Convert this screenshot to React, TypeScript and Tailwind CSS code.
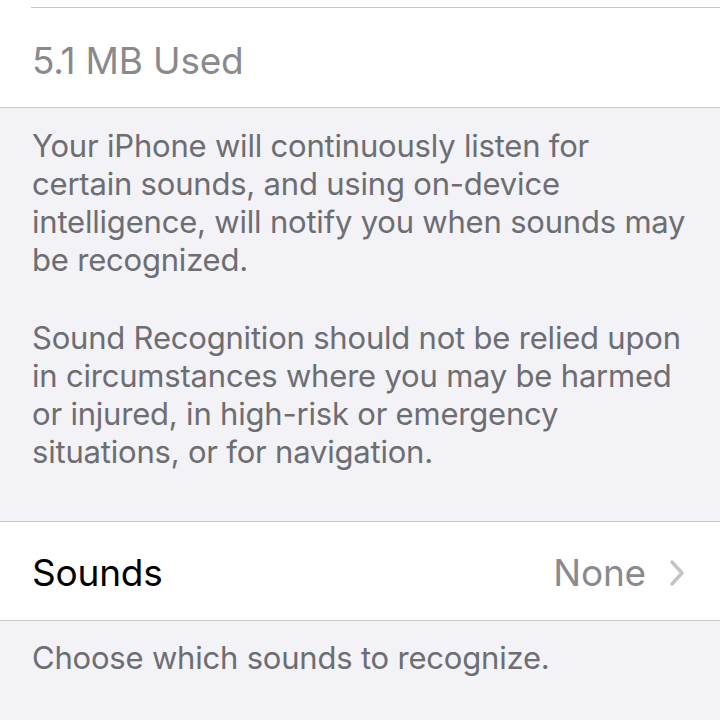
import React from 'react';

const App: React.FC = () => {
  return (
    <div className="w-[720px] h-[720px] overflow-hidden bg-[#f2f2f7] font-['Inter','Noto_Sans',sans-serif]">
      {/* Storage cell */}
      <div className="bg-white border-b border-[#c8c7cc]">
        <div className="h-[8px] ml-[31px] border-b border-[#c8c7cc]" />
        <div className="h-[99px] flex items-center pl-[32px] pt-[6px]">
          <span className="text-[37px] tracking-[-0.2px] text-[#8a8a8e]">5.1 MB Used</span>
        </div>
      </div>

      {/* Footer */}
      <div className="px-[32px] pt-[19px] pb-[50px] text-[31px] leading-[38px] text-[#6d6d72] tracking-[-0.2px]">
        <p>
          Your iPhone will continuously listen for certain sounds, and using on-device
          intelligence, will notify you when sounds may be recognized.
        </p>
        <p className="mt-[40px]">
          Sound Recognition should not be relied upon in circumstances where you may be harmed
          or injured, in high-risk or emergency situations, or for navigation.
        </p>
      </div>

      {/* Sounds cell */}
      <div className="bg-white border-y border-[#c8c7cc] h-[100px] flex items-center pl-[32px] pr-[34px] pt-[4px]">
        <span className="flex-1 text-[37px] tracking-[-0.2px] text-black">Sounds</span>
        <span className="text-[37px] tracking-[-0.2px] text-[#8a8a8e]">None</span>
        <svg width="18" height="30" viewBox="0 0 18 30" className="ml-[22px]">
          <path d="M4 4 L14 15 L4 26" fill="none" stroke="#c4c4c7" strokeWidth="3.5" strokeLinecap="round" strokeLinejoin="round" />
        </svg>
      </div>

      <div className="px-[32px] pt-[18px] text-[31px] leading-[38px] text-[#6d6d72] tracking-[-0.2px]">
        Choose which sounds to recognize.
      </div>
    </div>
  );
};

export default App;
